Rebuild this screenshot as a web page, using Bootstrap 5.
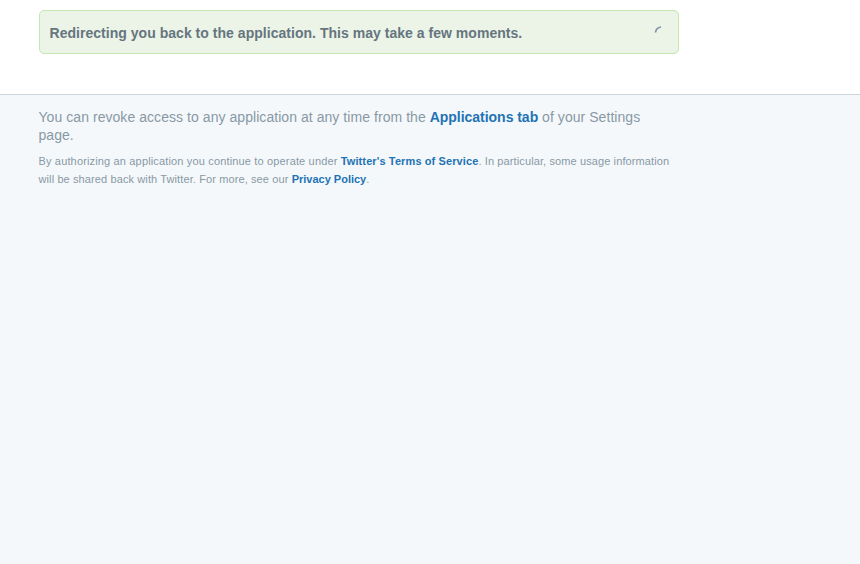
<!DOCTYPE html>
<html lang="en">
<head>
<meta charset="utf-8">
<meta name="viewport" content="width=device-width, initial-scale=1">
<title>Redirecting</title>
<link href="https://cdn.jsdelivr.net/npm/bootstrap@5.3.0/dist/css/bootstrap.min.css" rel="stylesheet">
<style>
body{background:#f5f8fa;font-family:"Liberation Sans",Arial,sans-serif;color:#8899a6;font-size:14px;line-height:18px}
.page-top{height:95px;border-bottom:1px solid #ccd6dd;padding:10px 0 0 39px}
.notice{width:640px;height:44px;padding:1px 16px 0 9.5px;background:#ebf4e7;border:1px solid #c3e6b3;border-radius:5px;color:#66757f;letter-spacing:.03px}
.notice svg{margin-top:-6px}
.foot{width:720px;padding:13px 0 0 38.5px}
.foot a{color:#2273b5;font-weight:bold;text-decoration:none}
.lead-text{letter-spacing:.055px;margin-bottom:8px}
.lead-text a{letter-spacing:-.03px}
.terms{font-size:11px;letter-spacing:.11px}
.terms .opening{letter-spacing:.155px}
.terms a.policy{letter-spacing:0}
</style>
</head>
<body>
<header class="page-top bg-white">
<div class="notice d-flex align-items-center justify-content-between">
<strong>Redirecting you back to the application. This may take a few moments.</strong>
<svg width="8" height="8" viewBox="0 0 8 8" fill="none" stroke="#8493a8" stroke-width="1.7"><path d="M1.500 6.500Q2 1.800 7 1"/></svg>
</div>
</header>
<footer class="foot">
<p class="lead-text">You can revoke access to any application at any time from the <a href="#">Applications tab</a> of your Settings<br>page.</p>
<p class="terms mb-0"><span class="opening">By authorizing an application you continue to operate under </span><a href="#">Twitter's Terms of Service</a>. In particular, some usage information<br>will be shared back with Twitter. For more, see our <a class="policy" href="#">Privacy Policy</a>.</p>
</footer>
<script src="https://cdn.jsdelivr.net/npm/bootstrap@5.3.0/dist/js/bootstrap.bundle.min.js"></script>
</body>
</html>
